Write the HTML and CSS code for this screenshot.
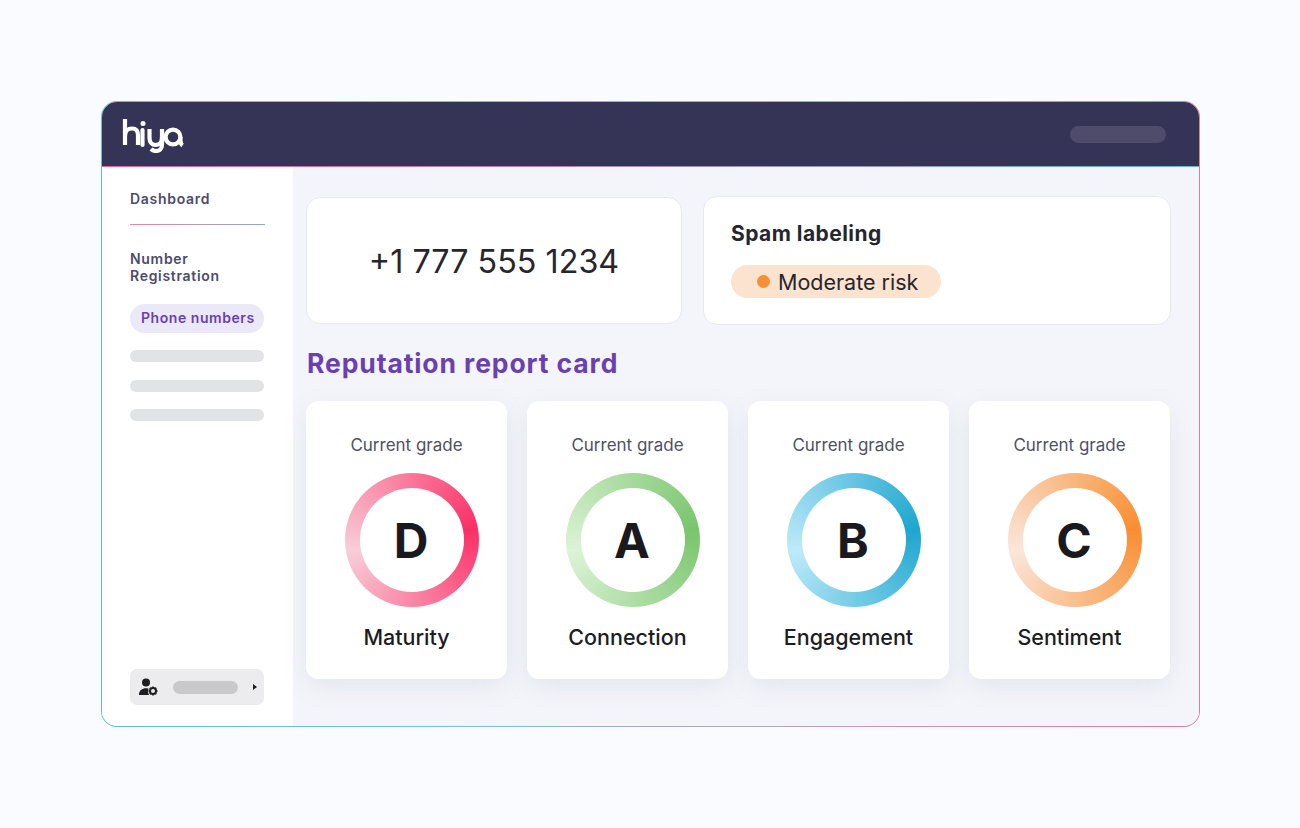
FILE: index.html
```html
<!DOCTYPE html>
<html lang="en">

<head>
  <meta charset="UTF-8">
  <meta name="viewport" content="width=device-width, initial-scale=1.0">
  <title>Hiya reputation report</title>
  <link rel="stylesheet" href="styles.css">
</head>

<body>
  <div class="frame">
    <div class="frame-inner">
      <header class="topbar">
        <svg class="logo" width="62" height="34" viewBox="0 0 62 34" fill="none" stroke="#fff" stroke-width="4.200">
          <path d="M3 0V26" />
          <path d="M3 17C3 12 6 9.500 10 9.500C14 9.500 16 12 16 16V26" />
          <path d="M20.500 11V26" stroke-linecap="round" />
          <circle cx="21" cy="4.500" r="2.500" fill="#fff" stroke="none" />
          <path d="M27.500 10V19C27.500 23.500 30 26 33.500 26C37 26 40 23.500 40 19V10" />
          <path d="M40 18V26C40 30 37.500 32 34 32C32 32 30.500 31.400 29 30" />
          <circle cx="51" cy="18" r="7.400" />
          <path d="M58.400 18C58.400 23 58.400 25 60.500 26.500" />
        </svg>
        <div class="topbar-pill"></div>
      </header>
      <div class="topbar-line"></div>

      <div class="content">
        <nav class="sidebar">
          <a class="nav-title">Dashboard</a>
          <div class="nav-line"></div>
          <a class="nav-title nav-group">Number<br>Registration</a>
          <a class="nav-active">Phone numbers</a>
          <div class="skeleton"></div>
          <div class="skeleton"></div>
          <div class="skeleton"></div>

          <div class="user-bar">
            <svg width="19" height="18" viewBox="0 0 19 18" fill="#1d1d22">
              <circle cx="7" cy="4.500" r="4" />
              <path d="M0 17C0 12.500 3 10.300 7 10.300C8 10.300 8.800 10.400 9.600 10.700C8.800 12.500 9 15 10 17Z" />
              <circle cx="14" cy="13" r="3" fill="none" stroke="#1d1d22" stroke-width="2" />
              <path d="M14 8.500V10M14 16V17.500M9.500 13H11M17 13H18.500M10.800 9.800L11.900 10.900M16.100 15.100L17.200 16.200M10.800 16.200L11.900 15.100M16.100 10.900L17.200 9.800" stroke="#1d1d22" stroke-width="1.600" />
            </svg>
            <div class="user-name"></div>
            <div class="user-arrow"></div>
          </div>
        </nav>

        <main class="main">
          <section class="top-row">
            <div class="panel phone-panel">+1 777 555 1234</div>
            <div class="panel spam-panel">
              <h2>Spam labeling</h2>
              <span class="risk"><i class="risk-dot"></i>Moderate risk</span>
            </div>
          </section>

          <h1>Reputation report card</h1>

          <section class="grades">
            <div class="grade-card">
              <p class="grade-label">Current grade</p>
              <div class="ring ring-pink"><div class="ring-inner">D</div></div>
              <p class="grade-name">Maturity</p>
            </div>
            <div class="grade-card">
              <p class="grade-label">Current grade</p>
              <div class="ring ring-green"><div class="ring-inner">A</div></div>
              <p class="grade-name">Connection</p>
            </div>
            <div class="grade-card">
              <p class="grade-label">Current grade</p>
              <div class="ring ring-blue"><div class="ring-inner">B</div></div>
              <p class="grade-name">Engagement</p>
            </div>
            <div class="grade-card">
              <p class="grade-label">Current grade</p>
              <div class="ring ring-orange"><div class="ring-inner">C</div></div>
              <p class="grade-name">Sentiment</p>
            </div>
          </section>
        </main>
      </div>
    </div>
  </div>
</body>

</html>
```

FILE: styles.css
```css
body {
  margin: 0;
  height: 828px;
  overflow: hidden;
  background-color: #f9fbfe;
  font-family: "Inter", "Liberation Sans", sans-serif;
}

.frame {
  width: 1099px;
  height: 626px;
  margin: 101px 0 0 101px;
  padding: 1px;
  box-sizing: border-box;
  border-radius: 16px;
  background: linear-gradient(to right, #63bcdc, #7cc0dc 30%, #c79ab8 70%, #d9809c);
}

.frame-inner {
  height: 100%;
  display: flex;
  flex-direction: column;
  border-radius: 15px;
  overflow: hidden;
  background-color: #fff;
}

.topbar {
  height: 64px;
  flex: none;
  display: flex;
  align-items: center;
  justify-content: space-between;
  padding: 0 33px 0 20px;
  background-color: #363456;
}

.logo {
  margin-top: 3px;
}

.topbar-pill {
  width: 96px;
  height: 17px;
  border-radius: 9px;
  background-color: #4e4b6b;
}

.topbar-line {
  height: 1px;
  flex: none;
  background: linear-gradient(to right, #e0688f, #a98ab8 50%, #6fb4d8);
}

.content {
  flex: 1;
  display: flex;
  min-height: 0;
}

.sidebar {
  width: 191px;
  flex: none;
  display: flex;
  flex-direction: column;
  box-sizing: border-box;
  padding: 23px 29px 21px 28px;
  background-color: #fff;
}

.nav-title {
  font-size: 14px;
  line-height: 17px;
  font-weight: 600;
  letter-spacing: 0.7px;
  color: #4e4b6c;
}

.nav-line {
  height: 1px;
  margin: 17px -1px 25px 0;
  background: linear-gradient(to right, #e08aa0, #8aa8c8);
}

.nav-active {
  height: 29px;
  margin: 20px 0 17px;
  padding-left: 11px;
  line-height: 28px;
  font-size: 14px;
  font-weight: 600;
  letter-spacing: 0.55px;
  white-space: nowrap;
  color: #6a3fb0;
  border-radius: 15px;
  background-color: #ebe9f7;
}

.skeleton {
  height: 12px;
  margin-bottom: 17.500px;
  border-radius: 6px;
  background-color: #e2e3e5;
}

.user-bar {
  height: 36px;
  margin-top: auto;
  display: flex;
  align-items: center;
  padding: 0 7px 0 9px;
  border-radius: 7px;
  background-color: #ececee;
}

.user-name {
  width: 65px;
  height: 13px;
  margin-left: 15px;
  border-radius: 7px;
  background-color: #c9c9cc;
}

.user-arrow {
  width: 0;
  height: 0;
  margin-left: auto;
  border-left: 4px solid #1d1d22;
  border-top: 3.500px solid transparent;
  border-bottom: 3.500px solid transparent;
}

.main {
  flex: 1;
  box-sizing: border-box;
  padding: 29px 28px 0 13px;
  background-color: #f3f5fa;
}

.top-row {
  display: grid;
  grid-template-columns: 376px 1fr;
  column-gap: 21px;
  align-items: center;
}

.panel {
  box-sizing: border-box;
  border: 1px solid #e6e9f1;
  border-radius: 14px;
  background-color: #fff;
}

.phone-panel {
  height: 127px;
  display: flex;
  align-items: center;
  justify-content: center;
  padding-top: 2px;
  font-size: 32.300px;
  color: #26262c;
}

.spam-panel {
  height: 129px;
  padding: 24px 27px 0;
}

.spam-panel h2 {
  margin: 0 0 19px;
  font-size: 21px;
  line-height: 25px;
  font-weight: 700;
  letter-spacing: 0.45px;
  color: #26262e;
}

.risk {
  width: 210px;
  height: 33px;
  display: flex;
  align-items: center;
  box-sizing: border-box;
  padding-left: 26px;
  border-radius: 17px;
  font-size: 21.500px;
  color: #26262e;
  background-color: #fbe3cf;
}

.risk-dot {
  width: 13px;
  height: 13px;
  margin-right: 8px;
  border-radius: 50%;
  background-color: #f78f37;
}

h1 {
  margin: 23px 0 23px 1px;
  font-size: 26.500px;
  line-height: 30px;
  font-weight: 700;
  letter-spacing: 0.9px;
  color: #6a3fb0;
}

.grades {
  display: grid;
  grid-template-columns: repeat(4, 201px);
  column-gap: 20px;
}

.grade-card {
  height: 278px;
  display: flex;
  flex-direction: column;
  align-items: center;
  border-radius: 12px;
  background-color: #fff;
  box-shadow: 0 8px 24px rgba(120, 130, 160, 0.12);
}

.grade-label {
  margin: 33px 0 17px;
  font-size: 17px;
  line-height: 22px;
  color: #50515e;
}

.ring {
  width: 134px;
  height: 134px;
  margin-left: 11px;
  display: flex;
  align-items: center;
  justify-content: center;
  border-radius: 50%;
}

.ring-pink {
  background: conic-gradient(from 80deg, #fb2f68, #f9cdd8 180deg, #fb2f68);
}

.ring-green {
  background: conic-gradient(from 80deg, #79c56c, #dcf3d6 180deg, #79c56c);
}

.ring-blue {
  background: conic-gradient(from 80deg, #1ea6cf, #bdeafa 180deg, #1ea6cf);
}

.ring-orange {
  background: conic-gradient(from 80deg, #f98e30, #fae6da 180deg, #f98e30);
}

.ring-inner {
  width: 104px;
  height: 104px;
  display: flex;
  align-items: center;
  justify-content: center;
  padding-right: 2px;
  box-sizing: border-box;
  border-radius: 50%;
  font-size: 48px;
  font-weight: 700;
  color: #1a1a1e;
  background-color: #fff;
}

.grade-name {
  margin: 17px 0 0;
  font-size: 21.500px;
  line-height: 26px;
  font-weight: 500;
  color: #1c1c22;
}
```
